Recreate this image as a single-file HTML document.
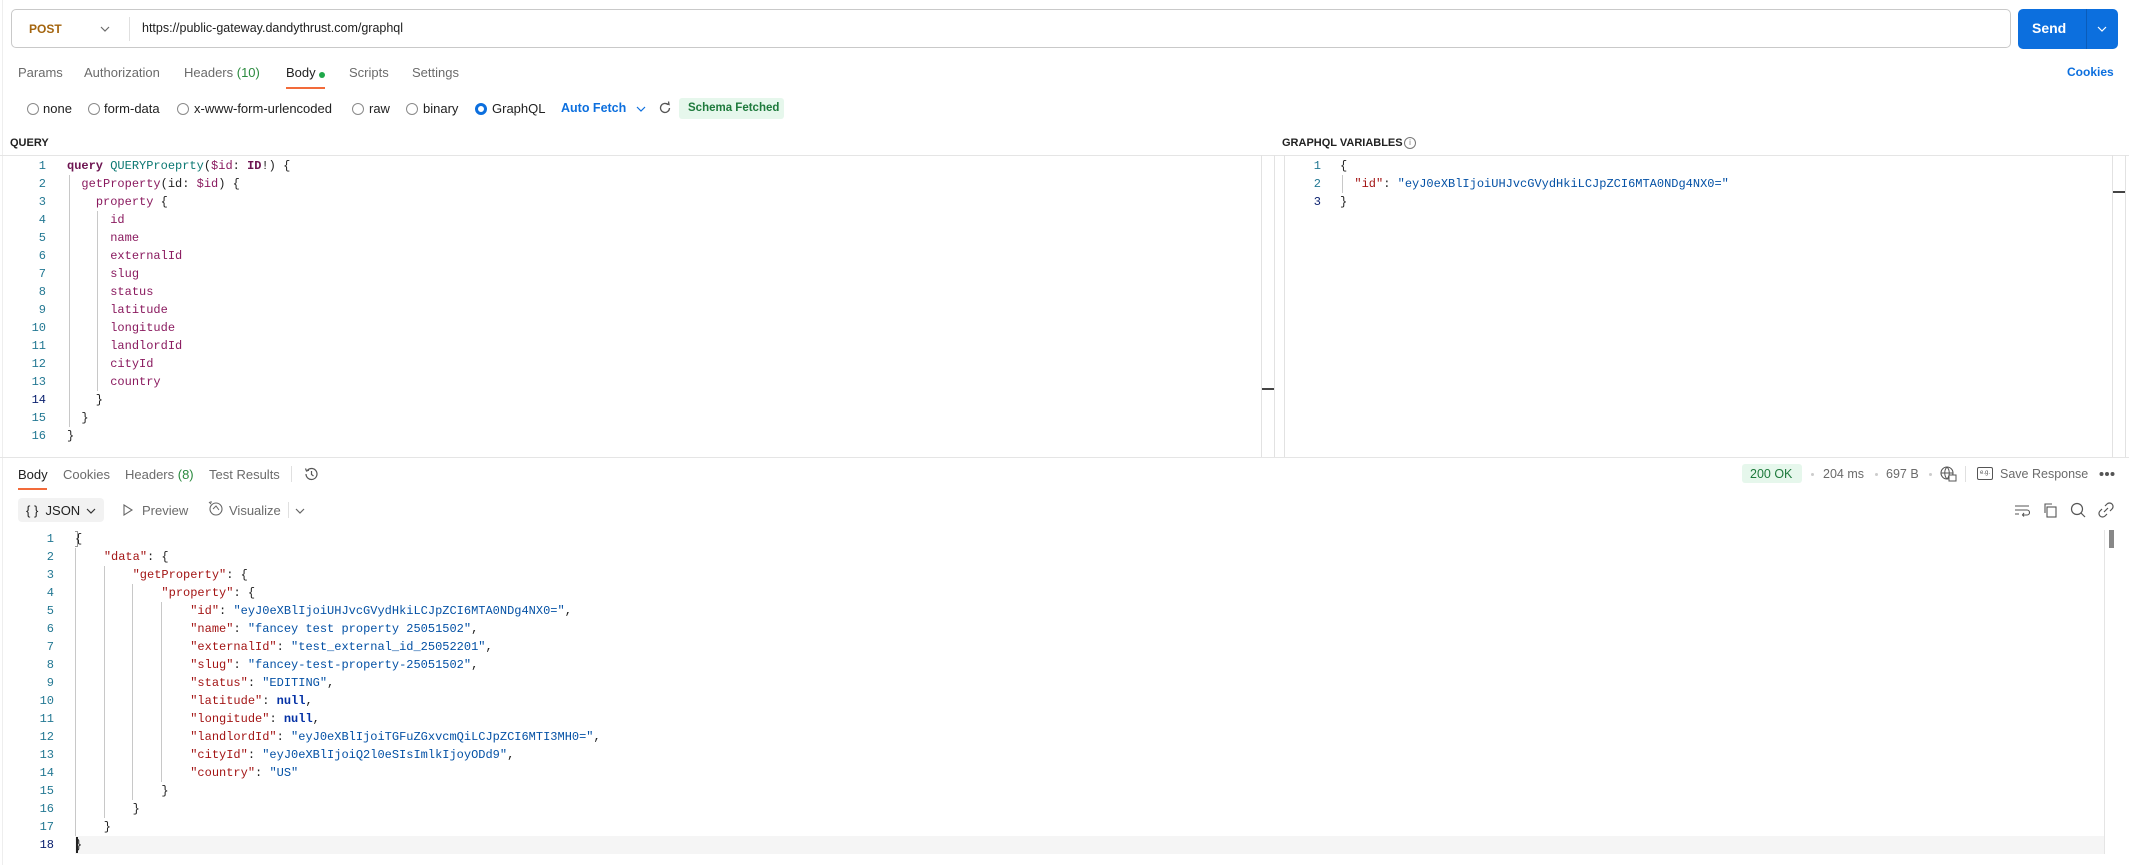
<!DOCTYPE html>
<html><head><meta charset="utf-8">
<style>
*{margin:0;padding:0;box-sizing:border-box}
body{width:2129px;height:865px;background:#fff;position:relative;overflow:hidden;font-family:"Liberation Sans",sans-serif;font-size:13px;color:#212121}
.a{position:absolute;white-space:pre}
.m{font-family:"Liberation Mono",monospace;font-size:12px;line-height:18px}
.g{color:#6b6b6b}
.kw{color:#6d1451;font-weight:bold}
.tn{color:#0b7872}
.f{color:#8a1a5f}
.k{color:#a31515}
.s{color:#0451a5}
.nl{color:#0431a5;font-weight:bold}
.guide{position:absolute;width:1px;background:#c8c8c8}
.radio{position:absolute;width:12px;height:12px;border:1px solid #8a8a8a;border-radius:50%}
</style></head><body>
<div class="a" style="left:0;top:0;width:3px;height:865px;border-right:1px solid #eee"></div>
<!-- URL bar -->
<div class="a" style="left:11px;top:9px;width:2000px;height:39px;border:1px solid #c9c9c9;border-radius:5px"></div>
<div class="a" style="left:29px;top:22px;color:#a4650f;font-weight:bold;font-size:12px">POST</div>
<svg class="a" style="left:100px;top:25px" width="10" height="8"><path d="M1 2 L5 6 L9 2" fill="none" stroke="#6b6b6b" stroke-width="1.2"/></svg>
<div class="a" style="left:129px;top:17px;width:1px;height:24px;background:#e0e0e0"></div>
<div class="a" style="left:142px;top:21px;font-size:12.5px;color:#212121">https://public-gateway.dandythrust.com/graphql</div>
<div class="a" style="left:2018px;top:9px;width:100px;height:40px;background:#0c6fde;border-radius:5px"></div>
<div class="a" style="left:2086px;top:9px;width:1px;height:40px;background:#0a5cba"></div>
<div class="a" style="left:2032px;top:20px;color:#fff;font-weight:bold;font-size:14px">Send</div>
<svg class="a" style="left:2097px;top:25px" width="10" height="8"><path d="M1 2 L5 6 L9 2" fill="none" stroke="#fff" stroke-width="1.2"/></svg>
<!-- tabs -->
<div class="a g" style="left:18px;top:65px">Params</div>
<div class="a g" style="left:84px;top:65px">Authorization</div>
<div class="a g" style="left:184px;top:65px">Headers <span style="color:#2a8a3e">(10)</span></div>
<div class="a" style="left:286px;top:65px">Body</div>
<div class="a" style="left:319px;top:72px;width:6px;height:6px;border-radius:50%;background:#1fa84a"></div>
<div class="a" style="left:286px;top:87px;width:39px;height:2px;background:#f26b3a"></div>
<div class="a g" style="left:349px;top:65px">Scripts</div>
<div class="a g" style="left:412px;top:65px">Settings</div>
<div class="a" style="left:2067px;top:65px;color:#0c6fde;font-weight:bold;font-size:12px">Cookies</div>
<!-- radios -->
<div class="radio" style="left:27px;top:103px"></div><div class="a" style="left:43px;top:101px">none</div>
<div class="radio" style="left:88px;top:103px"></div><div class="a" style="left:104px;top:101px">form-data</div>
<div class="radio" style="left:177px;top:103px"></div><div class="a" style="left:194px;top:101px">x-www-form-urlencoded</div>
<div class="radio" style="left:352px;top:103px"></div><div class="a" style="left:369px;top:101px">raw</div>
<div class="radio" style="left:406px;top:103px"></div><div class="a" style="left:423px;top:101px">binary</div>
<div class="radio" style="left:475px;top:103px;border:3px solid #0c6fde"></div><div class="a" style="left:492px;top:101px">GraphQL</div>
<div class="a" style="left:561px;top:101px;color:#0c6fde;font-weight:bold;font-size:12.5px">Auto Fetch</div>
<svg class="a" style="left:636px;top:105px" width="10" height="8"><path d="M1 2 L5 6 L9 2" fill="none" stroke="#0c6fde" stroke-width="1.2"/></svg>
<svg class="a" style="left:658px;top:101px" width="14" height="14"><path d="M11.5 7 A4.5 4.5 0 1 1 10 3.6" fill="none" stroke="#555" stroke-width="1.3"/><path d="M8 2.5 L11 3.5 L10.5 0.5" fill="none" stroke="#555" stroke-width="1.3"/></svg>
<div class="a" style="left:679px;top:98px;width:105px;height:21px;background:#e6f7ec;border-radius:3px"></div>
<div class="a" style="left:688px;top:102px;color:#1e7a3c;font-weight:bold;font-size:11.5px">Schema Fetched</div>
<!-- labels -->
<div class="a" style="left:10px;top:137px;font-size:11px;font-weight:bold;color:#212121">QUERY</div>
<div class="a" style="left:1282px;top:137px;font-size:11px;font-weight:bold;color:#212121">GRAPHQL VARIABLES</div>
<div class="a" style="left:1404px;top:137px;width:12px;height:12px;border:1px solid #777;border-radius:50%;font-size:8px;text-align:center;line-height:10px;color:#777">i</div>
<!-- editors borders -->
<div class="a" style="left:0;top:155px;width:2129px;height:1px;background:#e5e5e5"></div>
<div class="a" style="left:1261px;top:155px;width:1px;height:302px;background:#e2e2e2"></div>
<div class="a" style="left:1274px;top:155px;width:1px;height:302px;background:#e2e2e2"></div>
<div class="a" style="left:1284px;top:155px;width:1px;height:302px;background:#e2e2e2"></div>
<div class="a" style="left:2112px;top:155px;width:1px;height:302px;background:#e2e2e2"></div>
<div class="a" style="left:2125px;top:155px;width:1px;height:302px;background:#e2e2e2"></div>
<div class="a" style="left:1262px;top:388px;width:12px;height:2px;background:#444"></div>
<div class="a" style="left:2113px;top:191px;width:12px;height:2px;background:#444"></div>
<div class="a" style="left:0;top:457px;width:2129px;height:1px;background:#e5e5e5"></div>
<!-- query code -->
<div class="a m" style="left:16px;top:157px;width:30px;text-align:right;color:#237893">1
2
3
4
5
6
7
8
9
10
11
12
13
<span style="color:#0b216f">14</span>
15
16</div>
<div class="guide" style="left:69px;top:175px;height:252px"></div>
<div class="guide" style="left:97px;top:211px;height:180px"></div>
<div class="a m" style="left:67px;top:157px"><span class="kw">query</span> <span class="tn">QUERYProeprty</span>(<span class="f">$id</span>: <span class="kw">ID</span>!) {
  <span class="f">getProperty</span>(id: <span class="f">$id</span>) {
    <span class="f">property</span> {
      <span class="f">id</span>
      <span class="f">name</span>
      <span class="f">externalId</span>
      <span class="f">slug</span>
      <span class="f">status</span>
      <span class="f">latitude</span>
      <span class="f">longitude</span>
      <span class="f">landlordId</span>
      <span class="f">cityId</span>
      <span class="f">country</span>
    }
  }
}</div>
<!-- variables code -->
<div class="a m" style="left:1296px;top:157px;width:25px;text-align:right;color:#237893">1
2
<span style="color:#0b216f">3</span></div>
<div class="guide" style="left:1342px;top:175px;height:18px"></div>
<div class="a m" style="left:1340px;top:157px">{
  <span class="k">"id"</span>: <span class="s">"eyJ0eXBlIjoiUHJvcGVydHkiLCJpZCI6MTA0NDg4NX0="</span>
}</div>
<!-- response tabs -->
<div class="a" style="left:18px;top:467px">Body</div>
<div class="a" style="left:18px;top:488px;width:29px;height:2px;background:#f26b3a"></div>
<div class="a g" style="left:63px;top:467px">Cookies</div>
<div class="a g" style="left:125px;top:467px">Headers <span style="color:#2a8a3e">(8)</span></div>
<div class="a g" style="left:209px;top:467px">Test Results</div>
<div class="a" style="left:291px;top:466px;width:1px;height:16px;background:#e0e0e0"></div>
<svg class="a" style="left:303px;top:466px" width="16" height="16"><path d="M3 8 A5.5 5.5 0 1 0 4.6 4.1" fill="none" stroke="#555" stroke-width="1.2"/><path d="M2.5 2.5 L3.5 5 L6 4.2" fill="none" stroke="#555" stroke-width="1.2"/><path d="M8.5 5 V8.5 L10.5 10" fill="none" stroke="#555" stroke-width="1.2"/></svg>
<div class="a" style="left:1742px;top:464px;width:60px;height:19px;background:#e6f7ec;border-radius:3px"></div>
<div class="a" style="left:1750px;top:467px;color:#1e7a3c;font-size:12.5px">200 OK</div>
<div class="a" style="left:1811px;top:473px;width:3px;height:3px;border-radius:50%;background:#ccc"></div>
<div class="a g" style="left:1823px;top:467px;font-size:12.5px">204 ms</div>
<div class="a" style="left:1875px;top:473px;width:3px;height:3px;border-radius:50%;background:#ccc"></div>
<div class="a g" style="left:1886px;top:467px;font-size:12.5px">697 B</div>
<div class="a" style="left:1929px;top:473px;width:3px;height:3px;border-radius:50%;background:#ccc"></div>
<svg class="a" style="left:1940px;top:466px" width="17" height="16"><circle cx="7" cy="7" r="6" fill="none" stroke="#555" stroke-width="1.1"/><path d="M1 7 H13 M7 1 C4 4 4 10 7 13 M7 1 C10 4 10 10 7 13" fill="none" stroke="#555" stroke-width="1"/><rect x="9" y="9" width="7" height="6" fill="#fff" stroke="#555"/></svg>
<div class="a" style="left:1965px;top:466px;width:1px;height:16px;background:#e0e0e0"></div>
<div class="a" style="left:1977px;top:467px;width:16px;height:13px;border:1.2px solid #555;border-radius:2px;font-size:6px;text-align:center;line-height:11px;color:#555">e.g.</div>
<div class="a g" style="left:2000px;top:467px;font-size:12.5px">Save Response</div>
<svg class="a" style="left:2099px;top:471px" width="16" height="6"><circle cx="2.5" cy="3" r="2" fill="#555"/><circle cx="8" cy="3" r="2" fill="#555"/><circle cx="13.5" cy="3" r="2" fill="#555"/></svg>
<!-- toolbar -->
<div class="a" style="left:18px;top:498px;width:86px;height:24px;background:#f2f2f2;border-radius:4px"></div>
<div class="a" style="left:26px;top:503px;font-size:13px">{ }  JSON</div>
<svg class="a" style="left:86px;top:507px" width="10" height="8"><path d="M1 2 L5 6 L9 2" fill="none" stroke="#333" stroke-width="1.2"/></svg>
<svg class="a" style="left:122px;top:503px" width="12" height="14"><path d="M2 2 L10 7 L2 12 Z" fill="none" stroke="#666" stroke-width="1.1"/></svg>
<div class="a g" style="left:142px;top:503px">Preview</div>
<svg class="a" style="left:207px;top:500px" width="17" height="17"><circle cx="9" cy="9" r="6" fill="none" stroke="#666" stroke-width="1.1"/><path d="M6 9 L9 6 L12 10" fill="none" stroke="#666"/><path d="M2 2 L4 4 M4 1 L4 3" stroke="#666"/></svg>
<div class="a g" style="left:229px;top:503px">Visualize</div>
<div class="a" style="left:288px;top:502px;width:1px;height:16px;background:#e0e0e0"></div>
<svg class="a" style="left:295px;top:507px" width="10" height="8"><path d="M1 2 L5 6 L9 2" fill="none" stroke="#666" stroke-width="1.2"/></svg>
<svg class="a" style="left:2014px;top:503px" width="16" height="14"><path d="M1 3 H15 M1 7 H13 A2.5 2.5 0 0 1 13 12 H9 M1 11 H5 M10 10 L8.5 12 L10 13.5" fill="none" stroke="#555" stroke-width="1.1"/></svg>
<svg class="a" style="left:2042px;top:502px" width="16" height="16"><rect x="5" y="5" width="9" height="10" fill="none" stroke="#555" stroke-width="1.1"/><path d="M3 11 V2 H10" fill="none" stroke="#555" stroke-width="1.1"/></svg>
<svg class="a" style="left:2070px;top:502px" width="16" height="16"><circle cx="7" cy="7" r="5.5" fill="none" stroke="#555" stroke-width="1.2"/><path d="M11 11 L15 15" stroke="#555" stroke-width="1.2"/></svg>
<svg class="a" style="left:2098px;top:502px" width="16" height="16"><path d="M6 10 L10 6 M7 4 L9 2 A3 3 0 0 1 14 7 L12 9 M9 12 L7 14 A3 3 0 0 1 2 9 L4 7" fill="none" stroke="#555" stroke-width="1.2"/></svg>
<!-- json -->
<div class="a" style="left:75px;top:836px;width:2030px;height:18px;background:#f5f5f5"></div>
<div class="a" style="left:2104px;top:530px;width:1px;height:324px;background:#e5e5e5"></div>
<div class="a" style="left:2109px;top:530px;width:5px;height:18px;background:#888"></div>
<div class="a m" style="left:24px;top:530px;width:30px;text-align:right;color:#237893">1
2
3
4
5
6
7
8
9
10
11
12
13
14
15
16
17
<span style="color:#0b216f">18</span></div>
<div class="guide" style="left:75px;top:548px;height:288px"></div>
<div class="guide" style="left:104px;top:566px;height:252px"></div>
<div class="guide" style="left:132px;top:584px;height:216px"></div>
<div class="guide" style="left:161px;top:602px;height:180px"></div>
<div class="a" style="left:75px;top:531px;width:3px;height:16px;border:1px solid #999;border-left:none"></div>
<div class="a" style="left:76px;top:837px;width:2px;height:16px;background:#222"></div>
<div class="a m" style="left:75px;top:530px">{
    <span class="k">"data"</span>: {
        <span class="k">"getProperty"</span>: {
            <span class="k">"property"</span>: {
                <span class="k">"id"</span>: <span class="s">"eyJ0eXBlIjoiUHJvcGVydHkiLCJpZCI6MTA0NDg4NX0="</span>,
                <span class="k">"name"</span>: <span class="s">"fancey test property 25051502"</span>,
                <span class="k">"externalId"</span>: <span class="s">"test_external_id_25052201"</span>,
                <span class="k">"slug"</span>: <span class="s">"fancey-test-property-25051502"</span>,
                <span class="k">"status"</span>: <span class="s">"EDITING"</span>,
                <span class="k">"latitude"</span>: <span class="nl">null</span>,
                <span class="k">"longitude"</span>: <span class="nl">null</span>,
                <span class="k">"landlordId"</span>: <span class="s">"eyJ0eXBlIjoiTGFuZGxvcmQiLCJpZCI6MTI3MH0="</span>,
                <span class="k">"cityId"</span>: <span class="s">"eyJ0eXBlIjoiQ2l0eSIsImlkIjoyODd9"</span>,
                <span class="k">"country"</span>: <span class="s">"US"</span>
            }
        }
    }
}</div>
</body></html>
